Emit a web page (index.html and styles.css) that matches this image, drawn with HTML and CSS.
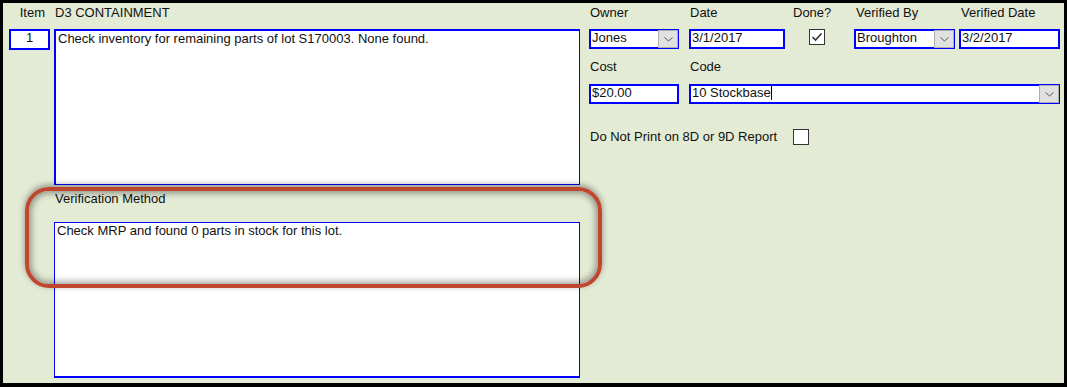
FILE: index.html
```html
<!DOCTYPE html>
<html>
	<head>
		<meta charset="utf-8" />
		<title>D3 Containment</title>
		<link rel="stylesheet" href="styles.css">
	</head>
	<body>
		<div class="frame">
		<div class="form">

			<div class="left">
				<div class="label label-item">Item</div>
				<div class="label">D3 CONTAINMENT</div>

				<div class="box item-no">1</div>
				<div class="memo memo-top">Check inventory for remaining parts of lot S170003. None found.</div>

				<div class="label verif-label">Verification Method</div>
				<div class="memo memo-verif">Check MRP and found 0 parts in stock for this lot.</div>
			</div>

			<div class="right">
				<div class="row row-1">
					<div class="field f-owner">
						<div class="label">Owner</div>
						<div class="box select"><span class="val">Jones</span><span class="drop"><svg width="9" height="5" viewBox="0 0 9 5"><polyline points="0.5,0.5 4.5,4 8.5,0.5" fill="none" stroke="#555" stroke-width="1"/></svg></span></div>
					</div>
					<div class="field f-date">
						<div class="label">Date</div>
						<div class="box"><span class="val">3/1/2017</span></div>
					</div>
					<div class="field f-done">
						<div class="label">Done?</div>
						<div class="check"><svg width="14" height="14" viewBox="0 0 14 14"><polyline points="2.5,7 5.5,10 11.5,3.5" fill="none" stroke="#333" stroke-width="1.6"/></svg></div>
					</div>
					<div class="field f-verby">
						<div class="label">Verified By</div>
						<div class="box select"><span class="val">Broughton</span><span class="drop"><svg width="9" height="5" viewBox="0 0 9 5"><polyline points="0.5,0.5 4.5,4 8.5,0.5" fill="none" stroke="#555" stroke-width="1"/></svg></span></div>
					</div>
					<div class="field f-vdate">
						<div class="label">Verified Date</div>
						<div class="box"><span class="val">3/2/2017</span></div>
					</div>
				</div>

				<div class="row row-2">
					<div class="field f-cost">
						<div class="label">Cost</div>
						<div class="box"><span class="val">$20.00</span></div>
					</div>
					<div class="field f-code">
						<div class="label">Code</div>
						<div class="box select"><span class="val">10 Stockbase<span class="caret"></span></span><span class="drop"><svg width="9" height="5" viewBox="0 0 9 5"><polyline points="0.5,0.5 4.5,4 8.5,0.5" fill="none" stroke="#555" stroke-width="1"/></svg></span></div>
					</div>
				</div>

				<div class="row row-3">
					<div class="label print-label">Do Not Print on 8D or 9D Report</div>
					<div class="check"></div>
				</div>
			</div>

		</div>
		<div class="highlight"></div>
		</div>
	</body>
</html>
```

FILE: styles.css
```css
body{
	margin: 0;
	font-family: "Liberation Sans", Arial, sans-serif;
	font-size: 13px;
	color: #111;
}

.frame{
	position: relative;
	box-sizing: border-box;
	width: 1067px;
	height: 387px;
	border: 3px solid #000;
	border-bottom-width: 4px;
	background-color: #e4ebd5;
}

.form{
	display: flex;
	padding: 2px 0 0 6px;
}

/* left side: item number + memo fields */
.left{
	display: grid;
	grid-template-columns: 41px 526px;
	column-gap: 4px;
	align-content: start;
}

.label{
	line-height: 16px;
	height: 16px;
	white-space: nowrap;
	padding-left: 1px;
}

.label-item{
	text-align: right;
	padding-right: 5px;
}

.box{
	box-sizing: border-box;
	height: 20px;
	margin-top: 8px;
	border: 2px solid #0000ff;
	background-color: #fff;
	line-height: 14px;
	display: flex;
	white-space: nowrap;
}

.box .val{
	flex: 1;
	padding-left: 1px;
	overflow: hidden;
}

.item-no{
	height: 21px;
	justify-content: center;
}

.memo{
	box-sizing: border-box;
	height: 156px;
	margin-top: 8px;
	border: 1px solid #0000ff;
	border-width: 2px 1px 1px 2px;
	background-color: #fff;
	line-height: 16px;
	padding: 0 2px;
}

.verif-label{
	grid-column: 2;
	margin-top: 6px;
}

.memo-verif{
	grid-column: 2;
	margin-top: 15px;
	border-width: 1px 1px 2px 1px;
}

/* right side: owner, dates, code */
.right{
	margin-left: 9px;
}

.row{
	display: flex;
}

.row-2{
	margin-top: 10px;
}

.row-2 .box{
	margin-top: 9px;
}

.row-3{
	margin-top: 25px;
	align-items: center;
}

.f-owner{ width: 90px; }
.f-date{ width: 96px; margin-left: 10px; }
.f-done{ width: 55px; margin-left: 7px; }
.f-verby{ width: 101px; margin-left: 7px; }
.f-vdate{ width: 101px; margin-left: 4px; }
.f-cost{ width: 90px; }
.f-code{ width: 371px; margin-left: 10px; }

.f-verby .label,
.f-vdate .label{
	padding-left: 2px;
}

.drop{
	box-sizing: border-box;
	width: 20px;
	margin: -1px -1px -1px 0;
	background-color: #e1e1e1;
	border: 1px solid #adadad;
	display: flex;
	align-items: center;
	justify-content: center;
}

.caret{
	display: inline-block;
	width: 1px;
	height: 14px;
	background-color: #000;
	vertical-align: top;
}

.check{
	box-sizing: border-box;
	width: 16px;
	height: 16px;
	border: 1px solid #333;
	background-color: #fff;
	display: flex;
	align-items: center;
	justify-content: center;
}

.f-done .check{
	margin-top: 8px;
	margin-left: 17px;
}

.print-label{
	width: 203px;
}

/* red callout drawn over the verification field */
.highlight{
	position: absolute;
	left: 22px;
	top: 184px;
	width: 577px;
	height: 101px;
	box-sizing: border-box;
	border: 4px solid #c0472f;
	border-radius: 24px;
	box-shadow: 0 -2px 6px rgba(0,0,0,0.4), inset 0 0 7px 2px rgba(0,0,0,0.4);
	pointer-events: none;
}
```
